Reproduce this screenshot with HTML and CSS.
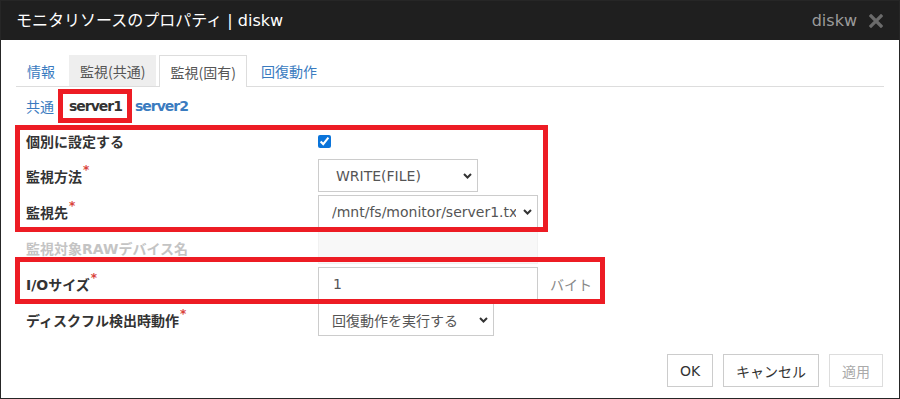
FILE: index.html
```html
<!DOCTYPE html>
<html lang="ja">
<head>
<meta charset="utf-8">
<title>モニタリソースのプロパティ | diskw</title>
<link rel="stylesheet" href="styles.css">
</head>
<body>
<div class="dialog">
  <div class="titlebar">
    <span class="title">モニタリソースのプロパティ | diskw</span>
    <div class="title-right">
      <span class="title-name">diskw</span>
      <svg class="close" width="14" height="14" viewBox="0 0 14 14" aria-hidden="true">
        <path d="M2 2 L12 12 M12 2 L2 12" stroke="#6b6b6b" stroke-width="3.2" stroke-linecap="square"/>
      </svg>
    </div>
  </div>
  <div class="body">
    <ul class="tabs">
      <li class="tab link">情報</li>
      <li class="tab shaded">監視(共通)</li>
      <li class="tab active">監視(固有)</li>
      <li class="tab link">回復動作</li>
    </ul>
    <div class="subtabs">
      <span class="sub link">共通</span>
      <span class="sub current">server1</span>
      <span class="sub link strong">server2</span>
    </div>
    <div class="form">
      <div class="mark mark1"></div>
      <div class="mark mark2"></div>

      <div class="label"><span>個別に設定する</span></div>
      <div class="field"><input class="check" type="checkbox" checked></div>

      <div class="label"><span>監視方法</span><span class="req">*</span></div>
      <div class="field">
        <div class="select w160 pad18"><span class="sel-text">WRITE(FILE)</span><svg class="chev" width="9" height="6" viewBox="0 0 9 6"><path d="M1 1 L4.5 4.5 L8 1" fill="none" stroke="#333" stroke-width="2"/></svg></div>
      </div>

      <div class="label"><span>監視先</span><span class="req">*</span></div>
      <div class="field">
        <div class="select w220"><span class="sel-text">/mnt/fs/monitor/server1.txt</span><svg class="chev wide" width="9" height="6" viewBox="0 0 9 6"><path d="M1 1 L4.5 4.5 L8 1" fill="none" stroke="#333" stroke-width="2"/></svg></div>
      </div>

      <div class="label disabled"><span>監視対象RAWデバイス名</span></div>
      <div class="field"><div class="input w220 off"></div></div>

      <div class="label"><span>I/Oサイズ</span><span class="req">*</span></div>
      <div class="field">
        <div class="input w220">1</div>
        <span class="unit">バイト</span>
      </div>

      <div class="label"><span>ディスクフル検出時動作</span><span class="req">*</span></div>
      <div class="field">
        <div class="select w176"><span class="sel-text">回復動作を実行する</span><svg class="chev" width="9" height="6" viewBox="0 0 9 6"><path d="M1 1 L4.5 4.5 L8 1" fill="none" stroke="#333" stroke-width="2"/></svg></div>
      </div>
    </div>
    <div class="buttons">
      <button class="btn ok">OK</button>
      <button class="btn cancel">キャンセル</button>
      <button class="btn apply" disabled>適用</button>
    </div>
  </div>
</div>
</body>
</html>
```
FILE: styles.css
```css
html, body {
  margin: 0;
  padding: 0;
  background: #fff;
}
body {
  font-family: "DejaVu Sans", "Noto Sans CJK JP", sans-serif;
  font-size: 14px;
  color: #333;
}
.dialog {
  width: 900px;
  height: 399px;
  box-sizing: border-box;
  border: 1px solid #262626;
  background: #fff;
  overflow: hidden;
}
.titlebar {
  height: 39px;
  background: #1f1f1f;
  display: flex;
  align-items: center;
  justify-content: space-between;
  padding: 0 16px 0 15px;
}
.title {
  color: #fff;
  font-size: 16px;
  line-height: 20px;
}
.title-right {
  display: flex;
  align-items: center;
  gap: 12px;
}
.title-name {
  color: #9b9b9b;
  font-size: 16px;
  line-height: 20px;
}
.close { display: block; }

.body {
  padding: 15px 15px 0 15px;
}
.tabs {
  list-style: none;
  margin: 0;
  padding: 0;
  display: flex;
  border-bottom: 1px solid #ddd;
  height: 31px;
}
.tab {
  height: 31px;
  box-sizing: border-box;
  padding: 0 10px;
  margin-right: 3px;
  display: flex;
  align-items: center;
  font-family: "Noto Sans CJK JP", sans-serif;
  font-size: 14px;
  border: 1px solid transparent;
  border-bottom: 0;
}
.tab.link { color: #3a7bbf; }
.tab.shaded { background: #eee; color: #555; }
.tab.active {
  background: #fff;
  color: #555;
  border-color: #ddd;
  height: 32px;
  margin-bottom: -1px;
}

.subtabs {
  display: flex;
  align-items: center;
  height: 34px;
  margin-top: 2px;
  padding-left: 10px;
}
.sub {
  font-size: 14px;
  line-height: 20px;
}
.sub.link {
  color: #3a7bbf;
  font-family: "Noto Sans CJK JP", sans-serif;
}
.sub.current {
  font-weight: bold;
  color: #333;
  border: 5px solid #ed1c24;
  padding: 2px 5px 2px 6px;
  margin-left: 4px;
  margin-right: 3px;
  letter-spacing: -1px;
}
.sub.strong {
  font-weight: bold;
  font-family: "DejaVu Sans", sans-serif;
  letter-spacing: -1px;
}

.form {
  position: relative;
  margin-top: 3px;
  padding-left: 10px;
  display: grid;
  grid-template-columns: 292px auto;
  grid-template-rows: 30px repeat(5, 33px);
  row-gap: 3px;
}
.mark {
  position: absolute;
  left: -1px;
  border: 5px solid #ed1c24;
  box-sizing: border-box;
  pointer-events: none;
}
.mark1 { top: -1px; width: 533px; height: 107px; }
.mark2 { top: 131px; width: 590px; height: 47px; }

.label {
  display: flex;
  align-items: center;
  font-family: "DejaVu Sans", "Noto Sans CJK JP", sans-serif;
  font-weight: bold;
  font-size: 14px;
  color: #333;
}
.label.disabled { color: #c4c4c4; }
.req {
  color: #d9433b;
  font-size: 12px;
  line-height: 12px;
  position: relative;
  top: -6px;
  margin-left: 1px;
}
.field {
  display: flex;
  align-items: center;
}
.check {
  margin: 0;
  width: 13px;
  height: 13px;
  accent-color: #0a74da;
}
.select, .input {
  height: 33px;
  box-sizing: border-box;
  border: 1px solid #ccc;
  display: flex;
  align-items: center;
  font-family: "DejaVu Sans", "Noto Sans CJK JP", sans-serif;
  font-size: 14px;
  color: #555;
  background: #fff;
}
.select { padding: 0 5px 0 13px; }
.select.pad18 { padding-left: 17px; }
.input { padding-left: 14px; }
.input.off { background: #f8f8f8; border-color: #f1f1f1; }
.sel-text {
  flex: 1;
  white-space: nowrap;
  overflow: hidden;
}
.chev { flex: none; margin-left: 4px; }
.chev.wide { margin-left: 7px; }
.w160 { width: 160px; }
.w220 { width: 220px; }
.w176 { width: 176px; }
.unit {
  margin-left: 12px;
  color: #888;
  font-family: "Noto Sans CJK JP", sans-serif;
  font-size: 14px;
}

.buttons {
  display: flex;
  justify-content: flex-end;
  gap: 10px;
  margin-top: 18px;
  margin-right: 1px;
}
.btn {
  height: 33px;
  box-sizing: border-box;
  border: 1px solid #ccc;
  background: #fff;
  color: #333;
  font-family: "DejaVu Sans", "Noto Sans CJK JP", sans-serif;
  font-size: 14px;
  padding: 0 12px;
  margin: 0;
}
.btn.ok { width: 46px; padding: 0; }
.btn.cancel { width: 96px; padding: 0; }
.btn.apply { width: 54px; padding: 0; color: #aaa; border-color: #ddd; }
```
